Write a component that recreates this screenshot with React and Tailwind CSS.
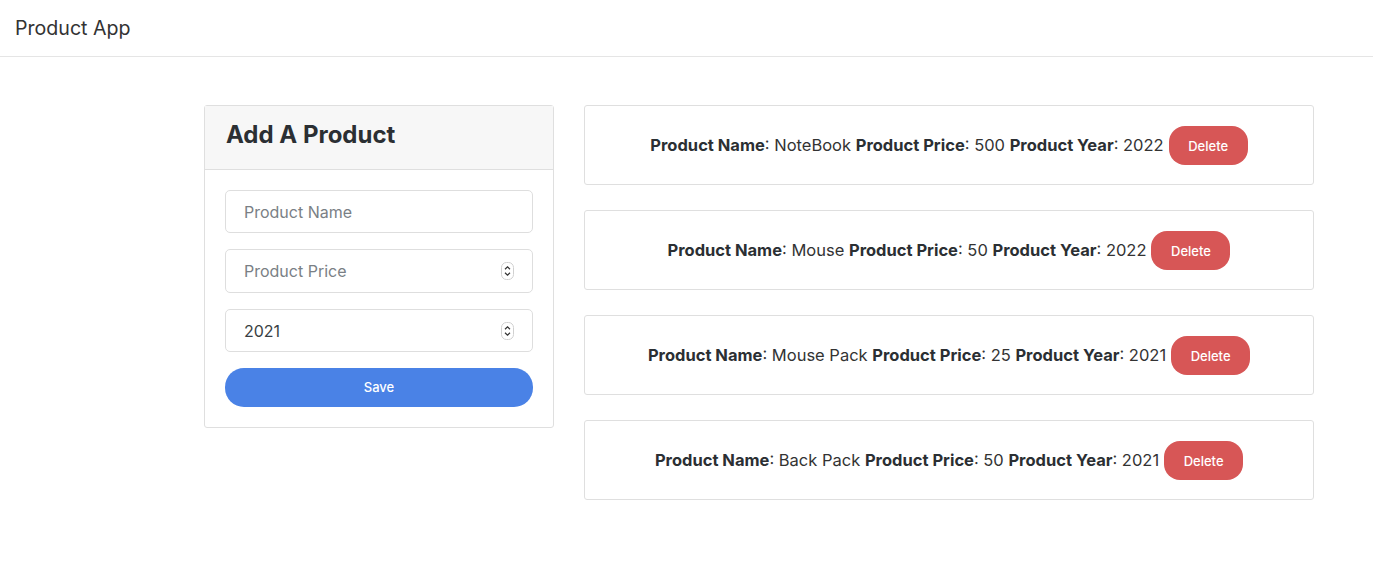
import { useState } from 'react';

const products = [
  { name: 'NoteBook', price: 500, year: 2022 },
  { name: 'Mouse', price: 50, year: 2022 },
  { name: 'Mouse Pack', price: 25, year: 2021 },
  { name: 'Back Pack', price: 50, year: 2021 },
];

function Spinner() {
  return (
    <svg className="pointer-events-none absolute right-[19px] top-1/2 -translate-y-1/2" width="13" height="18" viewBox="0 0 13 18">
      <rect x="0.5" y="0.5" width="12" height="17" rx="5" fill="#fff" stroke="#d0d0d0" />
      <path d="M4 7.2 L6.5 4.8 L9 7.2" fill="none" stroke="#333" strokeWidth="1.2" />
      <path d="M4 10.8 L6.5 13.2 L9 10.8" fill="none" stroke="#333" strokeWidth="1.2" />
    </svg>
  );
}

export default function App() {
  const [name, setName] = useState('');
  const [price, setPrice] = useState('');
  const [year, setYear] = useState('2021');

  return (
    <div className="min-h-screen bg-white text-[#212529]" style={{ fontFamily: 'Inter, "Noto Sans", sans-serif' }}>
      <nav className="flex h-[57px] items-center border-b border-[#e5e5e5] px-[15px] pt-[2px]">
        <span className="text-[19.6px] text-[#333]">Product App</span>
      </nav>

      <div className="flex items-start gap-[30px] pl-[204px] pt-[48px]">
        <div className="w-[350px] rounded-[3px] border border-[#dfdfdf]">
          <div className="flex h-[64px] items-center border-b border-[#dfdfdf] bg-[#f7f7f7] px-[21px] pb-[5px]">
            <h2 className="text-[24px] font-bold text-[#2b2f33]">Add A Product</h2>
          </div>
          <div className="flex flex-col gap-[16px] px-[20px] pb-[20px] pt-[20px]">
            <input
              value={name}
              onChange={e => setName(e.target.value)}
              placeholder="Product Name"
              className="h-[43px] w-full rounded-[5px] border border-[#dedede] px-[18px] text-[16px] text-[#444] outline-none placeholder:text-[#7a7f85]"
            />
            <div className="relative">
              <input
                value={price}
                onChange={e => setPrice(e.target.value)}
                placeholder="Product Price"
                className="h-[44px] w-full rounded-[5px] border border-[#dedede] px-[18px] text-[16px] text-[#444] outline-none placeholder:text-[#7a7f85]"
              />
              <Spinner />
            </div>
            <div className="relative">
              <input
                value={year}
                onChange={e => setYear(e.target.value)}
                className="h-[43px] w-full rounded-[5px] border border-[#dedede] px-[18px] text-[16px] text-[#3a3f44] outline-none"
              />
              <Spinner />
            </div>
            <button className="h-[39px] w-full rounded-[19px] bg-[#4a82e6] text-[13px] font-medium text-white">
              Save
            </button>
          </div>
        </div>

        <div className="flex w-[730px] flex-col gap-[25px]">
          {products.map(p => (
            <div key={p.name} className="flex h-[80px] items-center justify-center rounded-[3px] border border-[#dfdfdf] text-[16.5px] text-[#333]">
              <span>
                <b className="font-bold text-[#2b2f33]">Product Name</b>: {p.name}{' '}
                <b className="font-bold text-[#2b2f33]">Product Price</b>: {p.price}{' '}
                <b className="font-bold text-[#2b2f33]">Product Year</b>: {p.year}
              </span>
              <button className="ml-[5px] h-[39px] w-[79px] rounded-[16px] bg-[#d75656] pt-[3px] text-[13px] font-medium text-white">
                Delete
              </button>
            </div>
          ))}
        </div>
      </div>
    </div>
  );
}
